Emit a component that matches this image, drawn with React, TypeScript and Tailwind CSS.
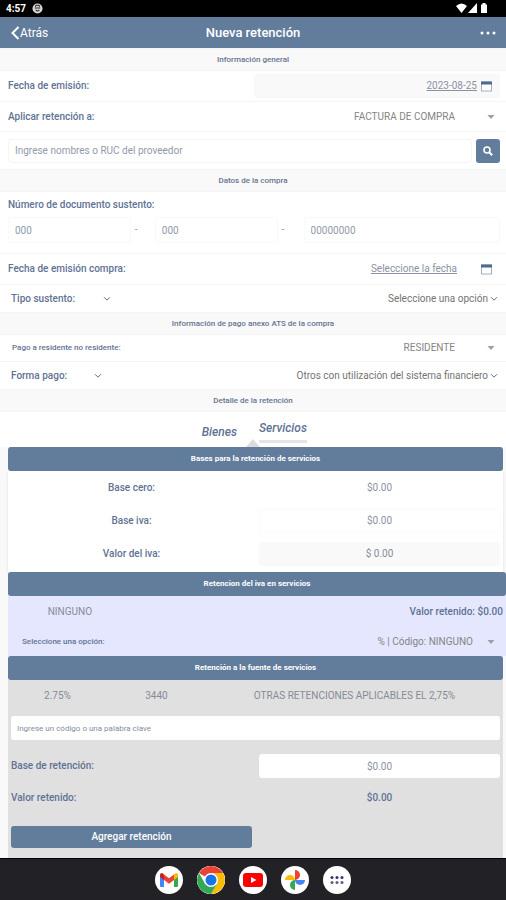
import { useState } from "react";
import type { ReactNode } from "react";

interface ChildrenProps {
  children: ReactNode;
}

interface SelectProps {
  id: string;
  options: string[];
  className?: string;
}

const CaretDown = () => (
  <svg viewBox="0 0 8 4" className="w-2 h-1 fill-[#9b9fa6]">
    <path d="M0.5 0h7L4 4z" />
  </svg>
);

const Chevron = () => (
  <svg
    viewBox="0 0 8 6"
    className="w-2 h-1.5 fill-none stroke-[#666c78] stroke-1"
  >
    <path d="M1 1.2l3 3 3-3" />
  </svg>
);

const CalendarIcon = () => (
  <svg viewBox="0 0 11 11" className="w-[11px] h-[11px] shrink-0">
    <rect x="0.5" y="1" width="10" height="9" fill="#fff" stroke="#a3afc1" />
    <rect x="0" y="0.5" width="11" height="3" fill="#4b6b92" />
  </svg>
);

const SectionTitle = ({ children }: ChildrenProps) => (
  <h2 className="flex items-center justify-center h-[23px] bg-[#f9f9f9] border-y border-[#f5f5f5] text-[8px] font-medium text-[#64748f]">
    {children}
  </h2>
);

const BarTitle = ({ children }: ChildrenProps) => (
  <h3 className="flex items-center justify-center h-6 rounded-[3px] bg-[#627c9c] text-[8px] font-bold text-white">
    {children}
  </h3>
);

// Select with a solid caret, the padding on the right leaves room for the arrow
function CaretSelect({ id, options, className }: SelectProps) {
  return (
    <div className="relative flex flex-1 items-center">
      <select
        id={id}
        className={`w-full appearance-none bg-transparent text-[10px] text-[#858585] [text-align-last:right] outline-none ${className ?? ""}`}
      >
        {options.map((item) => (
          <option key={item}>{item}</option>
        ))}
      </select>
      <span className="absolute right-0 pointer-events-none">
        <CaretDown />
      </span>
    </div>
  );
}

// Select with a thin chevron right after the text
function ChevronSelect({ id, options }: SelectProps) {
  return (
    <div className="relative flex flex-1 items-center">
      <select
        id={id}
        className="w-full appearance-none bg-transparent pr-2.5 text-[10px] text-[#747474] [text-align-last:right] outline-none"
      >
        {options.map((item) => (
          <option key={item}>{item}</option>
        ))}
      </select>
      <span className="absolute right-0 pointer-events-none">
        <Chevron />
      </span>
    </div>
  );
}

const GmailIcon = () => (
  <svg viewBox="0 0 20 16" className="w-5 h-4">
    <path d="M1 3v11q0 1 1 1h3V7z" fill="#4285f4" />
    <path d="M19 3v11q0 1-1 1h-3V7z" fill="#34a853" />
    <path d="M15 2.500V8l4-3V3q0-2-2-2-.8 0-2 1.500z" fill="#fbbc04" />
    <path d="M5 2.500V8l5 3.700L15 8V2.500L10 6.300z" fill="#ea4335" />
    <path d="M1 3v2l4 3V2.500Q4 1 3 1 1 1 1 3z" fill="#c5221f" />
  </svg>
);

const ChromeIcon = () => (
  <svg viewBox="0 0 28 28" className="w-7 h-7">
    <circle cx="14" cy="14" r="14" fill="#fff" />
    <path d="M14 14L1.900 7A14 14 0 0 1 26.100 7z" fill="#ea4335" />
    <path d="M14 7h12.100A14 14 0 0 1 14 28l6-10.500z" fill="#fbbc04" />
    <path d="M1.900 7A14 14 0 0 0 14 28l6.100-10.500L14 14 8 17.500z" fill="#34a853" />
    <circle cx="14" cy="14" r="7" fill="#fff" />
    <circle cx="14" cy="14" r="5.500" fill="#1a73e8" />
  </svg>
);

const YoutubeIcon = () => (
  <svg viewBox="0 0 20 14" className="w-5 h-3.5">
    <rect width="20" height="14" rx="3" fill="#f00" />
    <path d="M8 4l5.500 3L8 10z" fill="#fff" />
  </svg>
);

const PhotosIcon = () => (
  <svg viewBox="0 0 20 20" className="w-5 h-5">
    <path d="M10 0a5 5 0 0 1 0 10z" fill="#ea4335" />
    <path d="M20 10a5 5 0 0 1-10 0z" fill="#4285f4" />
    <path d="M10 20a5 5 0 0 1 0-10z" fill="#34a853" />
    <path d="M0 10a5 5 0 0 1 10 0z" fill="#fbbc04" />
  </svg>
);

const AppsIcon = () => (
  <svg viewBox="0 0 14 8" className="w-3.5 h-2">
    {[2, 7, 12].map((x) => (
      <g key={x}>
        <circle cx={x} cy="1.500" r="1.500" fill="#34346c" />
        <circle cx={x} cy="6.500" r="1.500" fill="#5d5d82" />
      </g>
    ))}
  </svg>
);

const dockApps = [
  { name: "Gmail", icon: <GmailIcon /> },
  { name: "Chrome", icon: <ChromeIcon /> },
  { name: "YouTube", icon: <YoutubeIcon /> },
  { name: "Fotos", icon: <PhotosIcon /> },
  { name: "Aplicaciones", icon: <AppsIcon /> },
];

export default function App() {
  const [proveedor, setProveedor] = useState("");
  const [codigo, setCodigo] = useState("");
  const [tab, setTab] = useState("servicios");

  return (
    <div className="flex min-h-screen flex-col bg-white font-[Roboto,sans-serif] text-[10px] leading-3 text-[#5f7294]">
      {/* Status bar */}
      <div className="flex items-center justify-between h-[17px] bg-black pl-1.5 pr-[18px] text-white">
        <div className="flex items-center gap-1.5">
          <span className="text-[10px] font-bold">4:57</span>
          <svg viewBox="0 0 12 12" className="w-[11px] h-[11px]">
            <circle cx="6" cy="6" r="5.500" fill="#d8d8d8" />
            <path
              d="M3 5.500h6M3.500 4l1-1.500h3l1 1.500M4 7.500q2 2.500 4 0"
              fill="none"
              stroke="#222"
              strokeWidth="1.200"
            />
          </svg>
        </div>
        <svg viewBox="0 0 32 11" className="w-8 h-[11px] fill-white">
          <path d="M0 3Q5.500-2 11 3L5.500 10z" />
          <path d="M21 0v10H12z" />
          <path d="M25 1.500h1.500V0h3v1.500H31V10H25z" />
        </svg>
      </div>

      {/* Header */}
      <header className="grid grid-cols-3 items-center h-[31px] bg-[#627c9c] px-2.5 text-white">
        <button className="flex items-center text-xs">
          <svg
            viewBox="0 0 10 14"
            className="w-2.5 h-3.5 fill-none stroke-white stroke-2"
          >
            <path d="M8.500 1L2.500 7l6 6" />
          </svg>
          Atrás
        </button>
        <h1 className="text-center text-[13px] font-medium whitespace-nowrap">
          Nueva retención
        </h1>
        <button aria-label="Más opciones" className="justify-self-end">
          <svg viewBox="0 0 16 4" className="w-4 h-1 fill-white">
            <circle cx="2" cy="2" r="1.500" />
            <circle cx="8" cy="2" r="1.500" />
            <circle cx="14" cy="2" r="1.500" />
          </svg>
        </button>
      </header>

      <main className="flex-1 flex flex-col">
        <SectionTitle>Información general</SectionTitle>
        <div className="flex items-center h-[31px] border-b border-[#f5f5f5] pl-2 pr-1.5">
          <span className="flex-1 font-medium">Fecha de emisión:</span>
          <button className="flex w-1/2 items-center justify-end gap-1 h-6 rounded-[3px] bg-[#f9f9f9] pr-2 text-[#8b93a3]">
            <span className="underline">2023-08-25</span>
            <CalendarIcon />
          </button>
        </div>
        <div className="flex items-center h-[30px] border-b border-[#f5f5f5] pl-2 pr-[11px]">
          <label htmlFor="aplicar" className="font-medium">
            Aplicar retención a:
          </label>
          <CaretSelect
            id="aplicar"
            options={["FACTURA DE COMPRA"]}
            className="pr-10"
          />
        </div>
        <div className="flex items-center gap-1 h-[37px] pl-2 pr-1.5">
          <input
            type="text"
            aria-label="Proveedor"
            value={proveedor}
            onChange={(e) => setProveedor(e.target.value)}
            placeholder="Ingrese nombres o RUC del proveedor"
            className="flex-1 h-6 rounded-[3px] border border-[#f5f5f5] px-1.5 placeholder:text-[#929aaa] outline-none"
          />
          <button
            aria-label="Buscar"
            className="flex items-center justify-center w-6 h-6 rounded-[3px] bg-[#627c9c]"
          >
            <svg
              viewBox="0 0 10 10"
              className="w-2.5 h-2.5 fill-none stroke-white"
            >
              <circle cx="4" cy="4" r="3" strokeWidth="1.600" />
              <path d="M6.200 6.200l3 3" strokeWidth="2" />
            </svg>
          </button>
        </div>

        <SectionTitle>Datos de la compra</SectionTitle>
        <div className="flex flex-col gap-1.5 h-[61px] pt-[7px] pl-2 pr-1.5">
          <span className="font-medium">Número de documento sustento:</span>
          <div className="grid grid-cols-[5fr_24px_5fr_26px_8fr] items-center">
            <input
              type="text"
              aria-label="Establecimiento"
              placeholder="000"
              className="w-full min-w-0 h-[26px] rounded-[3px] border border-[#f9f9f9] px-1.5 placeholder:text-[#929aaa] outline-none"
            />
            <span className="pl-1 text-[#929aaa]">-</span>
            <input
              type="text"
              aria-label="Punto de emisión"
              placeholder="000"
              className="w-full min-w-0 h-[26px] rounded-[3px] border border-[#f9f9f9] px-1.5 placeholder:text-[#929aaa] outline-none"
            />
            <span className="pl-1 text-[#929aaa]">-</span>
            <input
              type="text"
              aria-label="Secuencial"
              placeholder="00000000"
              className="w-full min-w-0 h-[26px] rounded-[3px] border border-[#f9f9f9] px-1.5 placeholder:text-[#929aaa] outline-none"
            />
          </div>
        </div>
        <div className="flex items-center h-8 border-y border-[#f5f5f5] pl-2 pr-3.5">
          <span className="flex-1 font-medium">Fecha de emisión compra:</span>
          <button className="flex items-center gap-6 text-[#8b93a3]">
            <span className="underline">Seleccione la fecha</span>
            <CalendarIcon />
          </button>
        </div>
        <div className="flex items-center h-[27px] pl-[11px] pr-2">
          <label htmlFor="sustento" className="w-[92px] font-medium">
            Tipo sustento:
          </label>
          <button aria-label="Ver tipos de sustento">
            <Chevron />
          </button>
          <ChevronSelect id="sustento" options={["Seleccione una opción"]} />
        </div>

        <SectionTitle>Información de pago anexo ATS de la compra</SectionTitle>
        <div className="flex items-center h-[27px] border-b border-[#f5f5f5] pl-3 pr-[11px]">
          <label htmlFor="residente" className="text-[8px] font-medium">
            Pago a residente no residente:
          </label>
          <CaretSelect
            id="residente"
            options={["RESIDENTE"]}
            className="pr-10"
          />
        </div>
        <div className="flex items-center h-[27px] pl-[11px] pr-2">
          <label htmlFor="formapago" className="w-[83px] font-medium">
            Forma pago:
          </label>
          <button aria-label="Ver formas de pago">
            <Chevron />
          </button>
          <ChevronSelect
            id="formapago"
            options={["Otros con utilización del sistema financiero"]}
          />
        </div>

        <SectionTitle>Detalle de la retención</SectionTitle>
        <div className="relative grid grid-cols-2 h-[35px] text-xs font-medium italic">
          <button
            onClick={() => setTab("bienes")}
            className={`justify-self-end mr-4 ${
              tab === "bienes" ? "border-b-[3px] border-[#e5e5e5]" : "pt-1"
            }`}
          >
            Bienes
          </button>
          <button
            onClick={() => setTab("servicios")}
            className={`self-start justify-self-start mt-2 ml-1.5 pb-1 ${
              tab === "servicios" ? "border-b-[3px] border-[#e5e5e5]" : ""
            }`}
          >
            Servicios
          </button>
          <svg
            viewBox="0 0 14 8"
            className="absolute bottom-0 left-1/2 -translate-x-1/2 w-3.5 h-2 fill-[#dcdcdc]"
          >
            <path d="M7 0l7 8H0z" />
          </svg>
        </div>

        <div className="flex flex-1 flex-col bg-[#f9f9f9] pl-2 pr-[3px]">
          <BarTitle>Bases para la retención de servicios</BarTitle>
          <div className="bg-white pb-0.5 text-center shadow-sm">
            <div className="grid grid-cols-2 items-center gap-[7px] h-[33px] px-[3px]">
              <label htmlFor="basecero" className="font-medium">
                Base cero:
              </label>
              <input
                id="basecero"
                type="text"
                placeholder="$0.00"
                className="w-full h-6 rounded-[3px] text-center placeholder:text-[#8b93a3] outline-none"
              />
            </div>
            <div className="grid grid-cols-2 items-center gap-[7px] h-[33px] px-[3px]">
              <label htmlFor="baseiva" className="font-medium">
                Base iva:
              </label>
              <input
                id="baseiva"
                type="text"
                placeholder="$0.00"
                className="w-full h-6 rounded-[3px] border border-[#fbfbfb] text-center placeholder:text-[#8b93a3] outline-none"
              />
            </div>
            <div className="grid grid-cols-2 items-center gap-[7px] h-[33px] px-[3px]">
              <label htmlFor="valoriva" className="font-medium">
                Valor del iva:
              </label>
              <input
                id="valoriva"
                type="text"
                readOnly
                value="$ 0.00"
                className="w-full h-6 rounded-[3px] bg-[#f9f9f9] text-center text-[#858b98] outline-none"
              />
            </div>
          </div>

          <div className="-mr-[3px] bg-[#e4e7fd]">
            <BarTitle>Retencion del iva en servicios</BarTitle>
            <div className="flex items-center justify-between h-8 pr-[3px]">
              <span className="w-1/4 text-center text-[#858b98]">NINGUNO</span>
              <span className="font-medium">Valor retenido: $0.00</span>
            </div>
            <div className="flex items-center h-7 pl-3.5 pr-[11px]">
              <label htmlFor="codigoiva" className="text-[8px] font-medium">
                Seleccione una opción:
              </label>
              <CaretSelect
                id="codigoiva"
                options={["% | Código: NINGUNO"]}
                className="pr-[22px]"
              />
            </div>
          </div>

          <div className="flex-1 bg-[#e0e0e0] pb-2.5">
            <BarTitle>Retención a la fuente de servicios</BarTitle>
            <div className="grid grid-cols-[1fr_1fr_3fr] items-center h-8 text-center text-[#858b98]">
              <span>2.75%</span>
              <span>3440</span>
              <span>OTRAS RETENCIONES APLICABLES EL 2,75%</span>
            </div>
            <div className="px-[3px]">
              <input
                type="text"
                aria-label="Código de retención"
                value={codigo}
                onChange={(e) => setCodigo(e.target.value)}
                placeholder="Ingrese un código o una palabra clave"
                className="block mt-1 w-full h-6 rounded-[3px] bg-white px-1.5 text-[8px] placeholder:text-[#858ea0] outline-none"
              />
              <div className="grid grid-cols-2 items-center gap-[7px] mt-3.5">
                <label htmlFor="baseret" className="font-medium">
                  Base de retención:
                </label>
                <input
                  id="baseret"
                  type="text"
                  placeholder="$0.00"
                  className="w-full h-6 rounded-[3px] bg-white text-center placeholder:text-[#8b93a3] outline-none"
                />
              </div>
              <div className="grid grid-cols-2 gap-[7px] mt-3.5 font-medium">
                <span>Valor retenido:</span>
                <span className="text-center">$0.00</span>
              </div>
              <div className="grid grid-cols-2 gap-[7px] mt-[22px]">
                <button className="h-[22px] rounded-[3px] bg-[#627c9c] font-medium text-white">
                  Agregar retención
                </button>
              </div>
            </div>
          </div>
        </div>
      </main>

      {/* Dock */}
      <nav className="flex items-center justify-center gap-3.5 h-[42px] border-t border-black bg-[#222226]">
        {dockApps.map((item) => (
          <button
            key={item.name}
            aria-label={item.name}
            className="flex items-center justify-center w-7 h-7 rounded-full bg-white"
          >
            {item.icon}
          </button>
        ))}
      </nav>
    </div>
  );
}
